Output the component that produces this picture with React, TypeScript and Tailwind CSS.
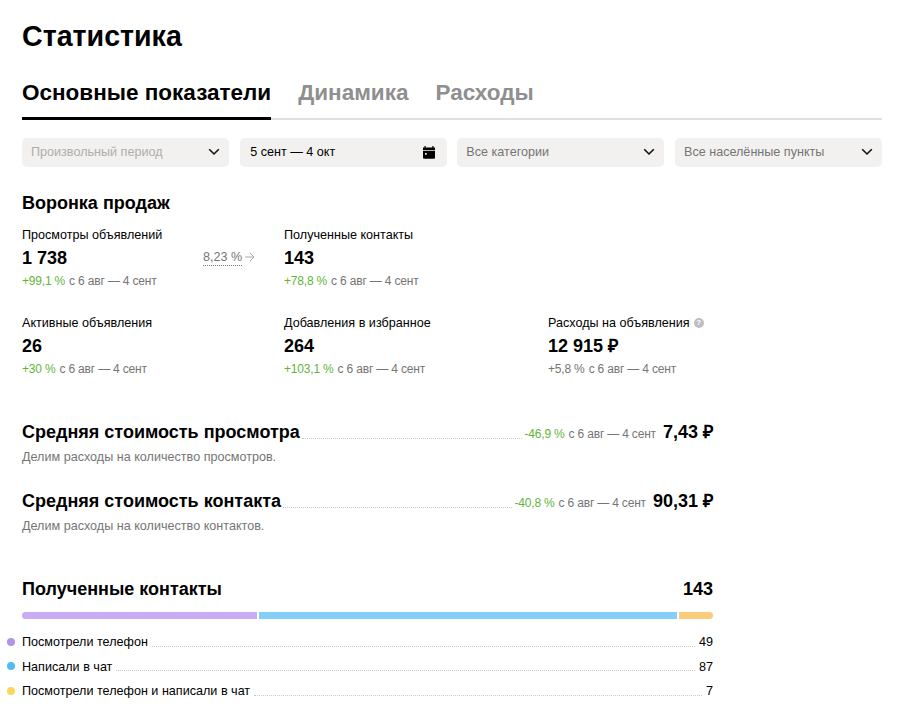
import React, { useState } from 'react';

const tabs = ['Основные показатели', 'Динамика', 'Расходы'];

const filters = [
  { id: 1, label: 'Произвольный период', color: 'text-[#adadad]', icon: 'chevron' },
  { id: 2, label: '5 сент — 4 окт', color: 'text-black', icon: 'calendar' },
  { id: 3, label: 'Все категории', color: 'text-[#757575]', icon: 'chevron' },
  { id: 4, label: 'Все населённые пункты', color: 'text-[#757575]', icon: 'chevron' },
];

const period = 'с 6 авг — 4 сент';

const contacts = [
  { id: 1, name: 'Посмотрели телефон', count: 49, dot: 'bg-[#b193e8]', bar: 'bg-[#c9aaf5]' },
  { id: 2, name: 'Написали в чат', count: 87, dot: 'bg-[#4fbcf0]', bar: 'bg-[#82d0fa]' },
  { id: 3, name: 'Посмотрели телефон и написали в чат', count: 7, dot: 'bg-[#f6d95b]', bar: 'bg-[#facb78]' },
];

const Chevron = () => (
  <svg className="-mt-0.5" width="12" height="8" viewBox="0 0 12 8" fill="none" stroke="#111" strokeWidth="1.6">
    <path d="M1.2 1.3 6 6l4.8-4.7" />
  </svg>
);

const Calendar = () => (
  <svg width="12" height="13" viewBox="0 0 12 13" fill="#000">
    <path d="M0 1.5h1.500V0h1.200v1.500h6.600V0h1.200v1.500H12V4H0z" />
    <path fillRule="evenodd" d="M0 4.700h12v6.800c0 .8-.5 1.300-1.300 1.300H1.300C.5 12.800 0 12.300 0 11.500zM2 7v1.700h1.700V7z" />
  </svg>
);

const Change = ({ value, good = true }: { value: string; good?: boolean }) => (
  <div className="flex gap-[4px] text-[12px] leading-4 tracking-[-0.18px] text-[#757575] whitespace-nowrap">
    <span className={good ? 'text-[#5fb53a]' : ''}>{value}</span>
    <span>{period}</span>
  </div>
);

const Metric = ({ title, value, change, good = true, hint = false }: {
  title: string; value: string; change: string; good?: boolean; hint?: boolean;
}) => (
  <div className="h-[88px]">
    <div className="flex items-center gap-1 pt-px text-[12.6px] leading-4 whitespace-nowrap">
      {title}
      {hint && (
        <span className="flex h-2.5 w-2.5 items-center justify-center rounded-full bg-[#bdbdbd] text-[8px] font-bold leading-none text-white">?</span>
      )}
    </div>
    <div className="mt-1 text-[18px] font-bold leading-[22px]">{value}</div>
    <div className="mt-1"><Change value={change} good={good} /></div>
  </div>
);

const CostRow = ({ title, note, change, price }: {
  title: string; note: string; change: string; price: string;
}) => (
  <div className="h-[69px]">
    <div className="flex h-[22px] items-center">
      <h2 className="text-[18px] font-bold leading-[22px] whitespace-nowrap">{title}</h2>
      <div className="mx-0.5 mt-3 grow border-b border-dotted border-[#c8c8c8]" />
      <div className="mt-1"><Change value={change} /></div>
      <div className="ml-[7px] text-[18px] font-bold leading-[22px] whitespace-nowrap">{price}</div>
    </div>
    <p className="mt-1.5 text-[12.6px] leading-4 text-[#757575]">{note}</p>
  </div>
);

const StatisticsPage = () => {
  const [activeTab, setActiveTab] = useState(tabs[0]);

  return (
    <div className="h-[728px] w-[902px] overflow-hidden bg-white pl-[22px] pr-5 pt-5 font-['Liberation_Sans',Arial,sans-serif] text-black">
      <h1 className="text-[28.6px] font-bold leading-8">Статистика</h1>

      {/* Tabs */}
      <div className="mt-6 flex h-11 gap-[27px] bg-[linear-gradient(#e0e0e0,#e0e0e0)] bg-[length:100%_2px] bg-bottom bg-no-repeat">
        {tabs.map((tab) => (
          <button
            key={tab}
            onClick={() => setActiveTab(tab)}
            className={`flex h-11 items-start border-b-3 pt-px text-[22.5px] font-bold leading-8 whitespace-nowrap ${
              tab === activeTab ? 'border-black text-black' : 'border-transparent text-[#8f8f8f]'
            }`}
          >
            {tab}
          </button>
        ))}
      </div>

      {/* Filters */}
      <div className="mt-[18px] grid grid-cols-4 gap-[10.67px]">
        {filters.map((filter) => (
          <button
            key={filter.id}
            className={`flex h-[29px] items-center justify-between rounded-[5px] bg-[#f2f1f0] px-[9px] text-[12.6px] leading-4 ${filter.color}`}
          >
            <span className={filter.icon === 'calendar' ? '-mt-0.5 ml-[1.5px] whitespace-nowrap' : '-mt-0.5 whitespace-nowrap'}>
              {filter.label}
            </span>
            {filter.icon === 'calendar' ? <span className="mr-[3px]"><Calendar /></span> : <Chevron />}
          </button>
        ))}
      </div>

      <div className="w-[691px]">
        <h2 className="mt-[25px] text-[18px] font-bold leading-[22px]">Воронка продаж</h2>

        <div className="mt-3 grid grid-cols-[181px_81px_264px_165px]">
          <Metric title="Просмотры объявлений" value="1 738" change="+99,1 %" />
          <div className="flex items-start gap-[3px] pt-6 text-[12.6px] leading-[15px] text-[#757575]">
            <span className="border-b border-dotted border-[#757575] whitespace-nowrap">8,23 %</span>
            <svg className="mt-0.5" width="10" height="10" viewBox="0 0 10 10" fill="none" stroke="#a8a8a8">
              <path d="M0 5h9M5 1l4 4-4 4" />
            </svg>
          </div>
          <Metric title="Полученные контакты" value="143" change="+78,8 %" />
          <div />
          <Metric title="Активные объявления" value="26" change="+30 %" />
          <div />
          <Metric title="Добавления в избранное" value="264" change="+103,1 %" />
          <Metric title="Расходы на объявления" value="12 915 ₽" change="+5,8 %" good={false} hint />
        </div>

        {/* Average costs */}
        <div className="mt-[19px]">
          <CostRow title="Средняя стоимость просмотра" note="Делим расходы на количество просмотров." change="-46,9 %" price="7,43 ₽" />
          <CostRow title="Средняя стоимость контакта" note="Делим расходы на количество контактов." change="-40,8 %" price="90,31 ₽" />
        </div>

        {/* Received contacts */}
        <div className="mt-[19px] flex justify-between text-[18px] font-bold leading-[22px]">
          <h2>Полученные контакты</h2>
          <span>143</span>
        </div>
        <div className="mt-3 flex h-[7px] gap-0.5 overflow-hidden rounded-full">
          {contacts.map((item) => (
            <div key={item.id} className={item.bar} style={{ flex: `${item.count} 0 0` }} />
          ))}
        </div>
        <div className="-ml-[15px] mt-[11px]">
          {contacts.map((item) => (
            <div key={item.id} className="flex h-[24.5px] items-center text-[12.6px] leading-4">
              <span className={`-mt-px mr-[7px] h-2 w-2 rounded-full ${item.dot}`} />
              <span className="whitespace-nowrap">{item.name}</span>
              <span className="mx-1 mt-2 grow border-b border-dotted border-[#c8c8c8]" />
              <span>{item.count}</span>
            </div>
          ))}
        </div>
      </div>
    </div>
  );
};

export default StatisticsPage;
